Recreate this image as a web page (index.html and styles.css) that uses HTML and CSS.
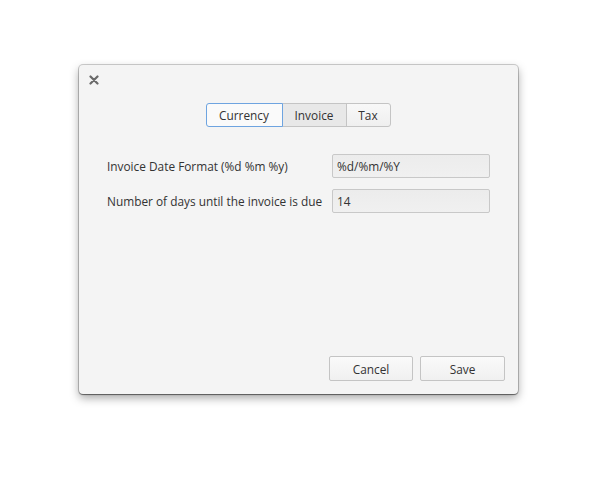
FILE: index.html
```html
<!DOCTYPE html>
<html>
<head>
<meta charset="utf-8">
<link rel="stylesheet" href="styles.css">
</head>
<body>
<div class="page">
<div class="dialog">
  <div class="titlebar">
    <svg class="close" width="10" height="10" viewBox="0 0 10 10"><path d="M1.5 1.5 L8.5 8.5 M8.5 1.5 L1.5 8.5" stroke="#6a6a6a" stroke-width="2.2" stroke-linecap="round"/></svg>
  </div>
  <div class="tabs">
    <div class="tab active">Currency</div>
    <div class="tab hover">Invoice</div>
    <div class="tab">Tax</div>
  </div>
  <div class="form">
    <label class="label">Invoice Date Format (%d %m %y)</label>
    <div class="input">%d/%m/%Y</div>
    <label class="label">Number of days until the invoice is due</label>
    <div class="input">14</div>
  </div>
  <div class="actions">
    <div class="btn cancel">Cancel</div>
    <div class="btn save">Save</div>
  </div>
</div>
</div>
</body>
</html>
```

FILE: styles.css
```css
html, body {
  margin: 0;
  padding: 0;
  background: #ffffff;
}
body {
  font-family: "Open Sans", "DejaVu Sans", sans-serif;
  font-size: 11.85px;
  color: #333333;
}
.page {
  height: 488px;
  padding: 65px 0 0 79px;
  box-sizing: border-box;
}
.dialog {
  width: 439px;
  height: 329px;
  box-sizing: border-box;
  background: #f4f4f4;
  border-radius: 4px;
  box-shadow: 0 0 0 1px rgba(0,0,0,0.18), 0 1px 1px rgba(0,0,0,0.4), 0 4px 10px rgba(0,0,0,0.35);
  display: flex;
  flex-direction: column;
  position: relative;
}
.titlebar {
  height: 38px;
  display: flex;
  align-items: flex-start;
  padding: 10px 0 0 10px;
  box-sizing: border-box;
}
.close {
  display: block;
}
.tabs {
  display: flex;
  justify-content: center;
  margin-left: -1px;
}
.tab {
  height: 24px;
  box-sizing: border-box;
  border: 1px solid #c4c4c4;
  background: linear-gradient(#f8f8f8, #efefef);
  display: flex;
  align-items: center;
  justify-content: center;
  color: #333333;
  margin-left: -1px;
  white-space: nowrap;
}
.tab:first-child { border-radius: 3px 0 0 3px; margin-left: 0; width: 77px; }
.tab:nth-child(2) { width: 65px; }
.tab:last-child { border-radius: 0 3px 3px 0; width: 45px; }
.tab.active {
  border-color: #6ea4e0;
  background: #fafafa;
  position: relative;
  z-index: 1;
}
.tab.hover {
  background: #e8e8e8;
}
.form {
  display: grid;
  grid-template-columns: 225px 158px;
  row-gap: 11px;
  padding: 27px 28px 0 28px;
  align-items: center;
}
.label {
  color: #333333;
  white-space: nowrap;
}
.input {
  height: 24px;
  box-sizing: border-box;
  border: 1px solid #c8c8c8;
  border-radius: 2px;
  background: linear-gradient(#ececec, #f0f0f0);
  padding: 0 4px;
  display: flex;
  align-items: center;
  color: #333333;
}
.actions {
  margin-top: auto;
  display: flex;
  justify-content: flex-end;
  gap: 7px;
  padding: 0 13px 13px 0;
}
.btn {
  height: 25px;
  box-sizing: border-box;
  border: 1px solid #c4c4c4;
  border-radius: 2px;
  background: linear-gradient(#fafafa, #f0f0f0);
  display: flex;
  align-items: center;
  justify-content: center;
  color: #333333;
}
.cancel { width: 84px; }
.save { width: 85px; }
```
